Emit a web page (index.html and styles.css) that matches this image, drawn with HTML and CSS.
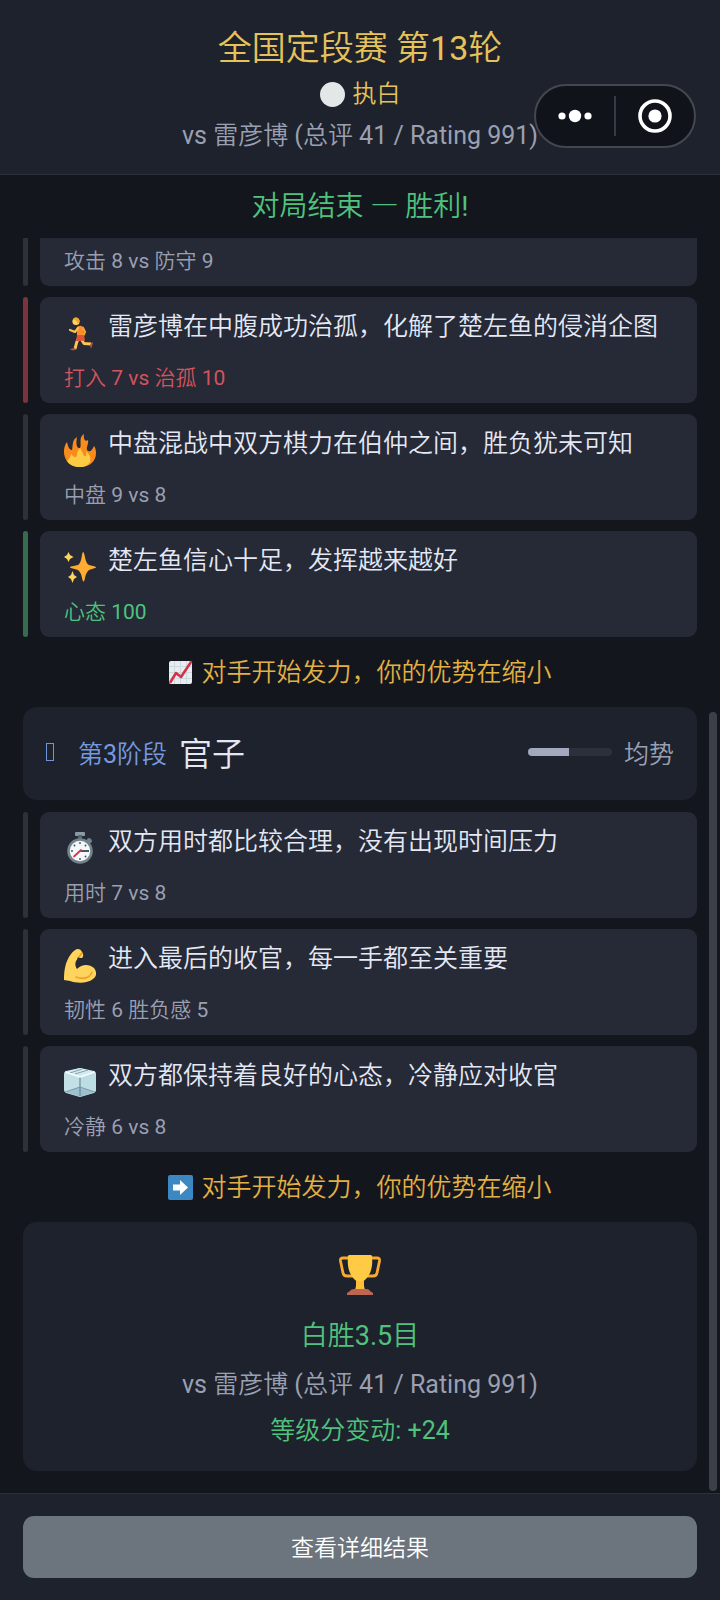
FILE: index.html
```html
<!DOCTYPE html>
<html lang="zh-CN">
<head>
<meta charset="utf-8">
<meta name="viewport" content="width=device-width, initial-scale=1">
<title>全国定段赛 第13轮</title>
<link rel="stylesheet" href="styles.css">
</head>
<body>
<header class="header">
  <h1 class="header-title">全国定段赛 第13轮</h1>
  <p class="side"><span class="stone"></span>执白</p>
  <p class="versus">vs 雷彦博 (总评 41 / Rating 991)</p>
  <div class="capsule">
    <button class="capsule-button" type="button" aria-label="更多">
      <svg width="36" height="36" viewBox="0 0 36 36" fill="#fff"><circle cx="5" cy="18" r="3.6"/><circle cx="18" cy="18" r="6.2"/><circle cx="31" cy="18" r="3.6"/></svg>
    </button>
    <span class="capsule-divider"></span>
    <button class="capsule-button" type="button" aria-label="关闭">
      <svg width="36" height="36" viewBox="0 0 36 36"><circle cx="18" cy="18" r="15" fill="none" stroke="#fff" stroke-width="3.6"/><circle cx="18" cy="18" r="6.6" fill="#fff"/></svg>
    </button>
  </div>
</header>

<main class="main">
  <p class="status">对局结束 <span class="dash">—</span> 胜利!</p>
  <div class="timeline">
    <article class="event event-cut">
      <div class="event-card"><p class="event-detail">攻击 8 vs 防守 9</p></div>
    </article>

    <article class="event event-loss">
      <div class="event-card">
        <div class="event-row">
          <svg class="event-icon" viewBox="0 0 32 34">
            <path d="M13 10 Q17 7 20 11 L19 21 13 21 Z" fill="#ff8b2c"/>
            <path d="M14 11 L11 15 6 13" fill="none" stroke="#fcc14f" stroke-width="2.2" stroke-linecap="round" stroke-linejoin="round"/>
            <path d="M19 11 L21 15 19 19" fill="none" stroke="#f6a72f" stroke-width="2.2" stroke-linecap="round" stroke-linejoin="round"/>
            <path d="M14 22 L12.500 26 11 32" fill="none" stroke="#fcc64f" stroke-width="3" stroke-linejoin="round"/>
            <path d="M17 22 L20 26.500 27 27" fill="none" stroke="#fcc64f" stroke-width="2.8" stroke-linejoin="round"/>
            <path d="M13 18 H20 L21 23.500 16 24 12 24 Z" fill="#dc5436"/>
            <path d="M28 25 L26 28 27 32 29 26 Z M11 31 L6 32 Q7 34 12 33 Z" fill="#bb5146"/>
            <circle cx="12" cy="4.500" r="3.600" fill="#ffd45c"/>
            <path d="M9 2 Q11 -1 14 1 Q17 4 14 7 L12.500 4 Z" fill="#f5a52d"/>
          </svg>
          <p class="event-text">雷彦博在中腹成功治孤，化解了楚左鱼的侵消企图</p>
        </div>
        <p class="event-detail">打入 7 vs 治孤 10</p>
      </div>
    </article>

    <article class="event">
      <div class="event-card">
        <div class="event-row">
          <svg class="event-icon" viewBox="0 0 32 34">
            <path d="M20 0 C14 4 18 10 16 14 C12 15 12 8 13 3 C8 6 9 11 8 16 C5 16 4 12 3 8 C0 12 0 16 0 19 C1 28 7 33 16 33 C26 33 32 27 32 19 C32 16 31 13 30 12 C28 16 27 18 24 17 C21 15 25 10 24 6 C22 8 19 6 20 0 Z" fill="#f98b1d"/>
            <path d="M16 14 C18 17 19 20 20 22 C22 23 23 21 22 17 C26 21 27 24 26 28 C24 31 21 33 16 33 C10 33 6 31 3 27 C5 26 7 22 7 19 C9 23 11 24 12 23 C14 20 12 18 16 14 Z" fill="#fecb45"/>
          </svg>
          <p class="event-text">中盘混战中双方棋力在伯仲之间，胜负犹未可知</p>
        </div>
        <p class="event-detail">中盘 9 vs 8</p>
      </div>
    </article>

    <article class="event event-win">
      <div class="event-card">
        <div class="event-row">
          <svg class="event-icon" viewBox="0 0 32 34">
            <path d="M19 1 Q20 1 20.500 4 Q22 13 25 14 L31 15.500 Q33 16.500 31 17 L25 19 Q22 21 20.500 29 Q19.500 32 18.500 29 Q17 21 14 19 L7 17 Q5 16 7 15.500 L14 14 Q17 12 18 4 Q18.500 1 19 1 Z" fill="#ffad32"/>
            <path d="M4.500 1 L6 4 9.500 6 6 8 4.500 11 3 8 0 6 3 4 Z M8.500 20 L10 24 13 26 10 28 8.500 32 7 28 4 26 7 24 Z" fill="#ffd45c"/>
          </svg>
          <p class="event-text">楚左鱼信心十足，发挥越来越好</p>
        </div>
        <p class="event-detail">心态 100</p>
      </div>
    </article>

    <p class="hint">
      <svg class="hint-icon" viewBox="0 0 25 25">
        <rect x="1" y="1" width="23" height="23" rx="2" fill="#e6ecef"/>
        <path d="M6.500 1 V24 M12.500 1 V24 M18.500 1 V24 M1 6.500 H24 M1 12.500 H24 M1 18.500 H24" stroke="#ccd9df" stroke-width="1"/>
        <path d="M2.500 22 L8 13 13 17 23 2" fill="none" stroke="#d33347" stroke-width="2.600" stroke-linejoin="round" stroke-linecap="round"/>
      </svg>
      对手开始发力，你的优势在缩小
    </p>

    <section class="phase">
      <span class="phase-mark"></span>
      <span class="phase-number">第3阶段</span>
      <h2 class="phase-name">官子</h2>
      <span class="meter"><span class="meter-fill" style="width: 49%"></span></span>
      <span class="phase-state">均势</span>
    </section>

    <article class="event">
      <div class="event-card">
        <div class="event-row">
          <svg class="event-icon" viewBox="0 0 32 34">
            <rect x="11" y="0" width="10" height="4" rx="1" fill="#8a9aa3"/>
            <rect x="14" y="3" width="4" height="4" fill="#56666f"/>
            <path d="M25 8 L26 9" stroke="#6f828c" stroke-width="4" stroke-linecap="round"/>
            <circle cx="16" cy="19" r="11.500" fill="#f4f8fa" stroke="#71848d" stroke-width="2.600"/>
            <g fill="#3c4a52"><circle cx="16" cy="11" r=".9"/><circle cx="16" cy="27" r=".9"/><circle cx="8" cy="19" r=".9"/><circle cx="10.500" cy="13.500" r=".9"/><circle cx="21.500" cy="13.500" r=".9"/><circle cx="21.500" cy="24.500" r=".9"/></g>
            <path d="M16 19 H25" stroke="#38444b" stroke-width="1.800"/>
            <path d="M17 18 L10 24.500" stroke="#db3446" stroke-width="1.800" stroke-linecap="round"/>
          </svg>
          <p class="event-text">双方用时都比较合理，没有出现时间压力</p>
        </div>
        <p class="event-detail">用时 7 vs 8</p>
      </div>
    </article>

    <article class="event">
      <div class="event-card">
        <div class="event-row">
          <svg class="event-icon" viewBox="0 0 32 34">
            <path d="M0 31 C0 22 1 13 7 5 C9 2 12 0 14 0 C17 0 18 3 19 5 C20 9 17 10 14 8 C13 9 14 10 12 12 C11 15 11 17 13 20 C18 15 25 15 30 19 C33 23 33 27 29 30 C23 35 12 34 6 32 Z" fill="#ffd45c"/>
            <path d="M12 28 C19 31 26 29 28 23" fill="none" stroke="#f0a12b" stroke-width="1.600" stroke-linecap="round"/>
            <path d="M15 8 L18 4" stroke="#ee9825" stroke-width="1.500" stroke-linecap="round"/>
          </svg>
          <p class="event-text">进入最后的收官，每一手都至关重要</p>
        </div>
        <p class="event-detail">韧性 6 胜负感 5</p>
      </div>
    </article>

    <article class="event">
      <div class="event-card">
        <div class="event-row">
          <svg class="event-icon" viewBox="0 0 32 34">
            <path d="M16 2 L30 5 Q32 6 32 8 V24 Q32 26 30 27 L16 31 2 27 Q0 26 0 24 V8 Q0 6 2 5 Z" fill="#c3e0e7"/>
            <path d="M16 2 L31 6 16 11 1 6 Z" fill="#d5eaf0"/>
            <path d="M17 12 L32 7 V25 L17 21 Z" fill="#bddde4"/>
            <path d="M16 21 L31 26 16 31 1 26 Z" fill="#9cc0ce"/>
            <path d="M16 11 V30" stroke="#66899a" stroke-width="1.200"/>
            <path d="M1 26 L16 21 31 26 M6 7 L18 3 M11 8 L24 4" fill="none" stroke="#6d909e" stroke-width=".8"/>
            <path d="M1 6 L16 11 31 6" fill="none" stroke="#f4fcff" stroke-width="1.400"/>
          </svg>
          <p class="event-text">双方都保持着良好的心态，冷静应对收官</p>
        </div>
        <p class="event-detail">冷静 6 vs 8</p>
      </div>
    </article>

    <p class="hint">
      <svg class="hint-icon" viewBox="0 0 25 25">
        <rect width="25" height="25" rx="2" fill="#3b88c3"/>
        <path d="M5 9.500 H12 V5 L20 12.500 12 20 V15.500 H5 Z" fill="#fff"/>
      </svg>
      对手开始发力，你的优势在缩小
    </p>

    <section class="result">
      <svg class="trophy" viewBox="0 0 42 42">
        <path d="M10 4 H4 Q1 4 1.500 7 L4 19 Q4.500 22 8 22 H14 M32 4 H38 Q41 4 40.500 7 L38 19 Q37.500 22 34 22 H28" fill="none" stroke="#f9a92e" stroke-width="2.800"/>
        <path d="M19 26 H23 L25 35 H17 Z" fill="#f9a92e"/>
        <path d="M9 2 Q9 1 11 1 H31 Q33 1 33 2 C34 13 32 20 26 26 Q24 28 21 28 Q18 28 16 26 C10 20 8 13 9 2 Z" fill="#ffcb45"/>
        <path d="M17 27 H25 V32 L26 36 H16 L17 32 Z" fill="#ffbd39"/>
        <path d="M8 41 V39 L11 37 Q12 35 15 35 H28 Q30 35 31 37 L34 39 V41 Z" fill="#bd6652"/>
      </svg>
      <h2 class="result-score">白胜3.5目</h2>
      <p class="result-versus">vs 雷彦博 (总评 41 / Rating 991)</p>
      <p class="result-rating">等级分变动: +24</p>
    </section>
    <span class="scroll-thumb"></span>
  </div>
</main>

<footer class="footer">
  <button class="details-button" type="button">查看详细结果</button>
</footer>
</body>
</html>
```
FILE: styles.css
```css
* {
  box-sizing: border-box;
}

body {
  margin: 0;
  min-height: 100vh;
  display: flex;
  flex-direction: column;
  background: #13171d;
  color: #e4e8f5;
  font-family: Roboto, "Noto Sans CJK SC DemiLight", "Noto Sans CJK SC", sans-serif;
  font-size: 25px;
  font-weight: 400;
}

h1, h2, p {
  margin: 0;
  font-weight: inherit;
}

button {
  border: 0;
  padding: 0;
  font: inherit;
  color: inherit;
  background: none;
}

svg {
  display: block;
  flex: none;
}

.header {
  position: relative;
  padding: 24px 24px 22px;
  border-bottom: 1px solid #2d313b;
  background: #1e222c;
  text-align: center;
}

.header-title {
  color: #e6c35a;
  font-size: 34px;
  line-height: 48px;
}

.side {
  display: flex;
  align-items: center;
  justify-content: center;
  gap: 8px;
  margin-top: 6px;
  color: #e6c35a;
  font-size: 24px;
  line-height: 32px;
}

.stone {
  width: 25px;
  height: 25px;
  border-radius: 50%;
  background: #e4e7e8;
}

.versus {
  margin-top: 10px;
  color: #9aa0b2;
  line-height: 32px;
}

.capsule {
  position: absolute;
  top: 84px;
  right: 24px;
  width: 162px;
  height: 64px;
  display: flex;
  align-items: center;
  border: 2px solid #44474f;
  border-radius: 32px;
  background: #10131a;
}

.capsule-button {
  flex: 1;
  display: flex;
  justify-content: center;
}

.capsule-divider {
  width: 2px;
  height: 40px;
  background: #373a42;
}

.main {
  flex: 1;
}

.status {
  padding: 12px 24px 11px;
  color: #4fc37d;
  font-size: 28px;
  line-height: 40px;
  text-align: center;
}

.dash {
  font-family: "Noto Sans CJK SC", sans-serif;
  line-height: 1;
}

.timeline {
  position: relative;
  padding: 0 23px 22px;
}

.event {
  display: flex;
  gap: 12px;
  margin-bottom: 11px;
}

.event::before {
  content: "";
  width: 5px;
  border-radius: 3px;
  background: #2d3138;
}

.event-loss::before {
  background: #7c343c;
}

.event-win::before {
  background: #366c4e;
}

.event-card {
  flex: 1;
  padding: 12px 24px 10px;
  border-radius: 9px;
  background: #262936;
}

.event-cut::before {
  border-radius: 0 0 3px 3px;
}

.event-cut .event-card {
  padding-top: 8px;
  border-radius: 0 0 9px 9px;
}

.event-row {
  display: flex;
  gap: 12px;
  margin-bottom: 12px;
}

.event-icon {
  width: 32px;
  height: 34px;
  margin-top: 8px;
}

.event-text {
  line-height: 36px;
}

.event-detail {
  color: #9aa0b2;
  font-size: 21px;
  line-height: 30px;
}

.event-loss .event-detail {
  color: #d2545c;
}

.event-win .event-detail {
  color: #4fc37d;
}

.hint {
  display: flex;
  align-items: center;
  justify-content: center;
  gap: 8px;
  margin-top: -11px;
  padding-top: 1px;
  color: #e2b043;
  line-height: 69px;
}

.hint-icon {
  width: 25px;
  height: 25px;
}

.phase {
  display: flex;
  align-items: center;
  min-height: 93px;
  margin-bottom: 12px;
  padding: 14px 23px 18px;
  border-radius: 14px;
  background: #1e222c;
}

.phase-mark {
  width: 8px;
  height: 18px;
  margin-right: 24px;
  border: 1px solid #6f94da;
}

.phase-number {
  color: #759ae2;
}

.phase-name {
  margin-left: 12px;
  font-size: 33px;
}

.meter {
  width: 84px;
  height: 8px;
  margin-left: auto;
  margin-right: 12px;
  overflow: hidden;
  border-radius: 4px;
  background: #2c303c;
}

.meter-fill {
  display: block;
  height: 100%;
  background: #a2a9bf;
}

.phase-state {
  color: #9aa0b2;
}

.result {
  display: flex;
  flex-direction: column;
  align-items: center;
  padding: 32px 24px 17px;
  border-radius: 14px;
  background: #1e222c;
  line-height: 46px;
}

.trophy {
  width: 42px;
  height: 42px;
  margin-bottom: 17px;
}

.result-score {
  margin-bottom: 3px;
  color: #4fc37d;
  font-size: 27px;
}

.result-versus {
  color: #9aa0b2;
}

.result-rating {
  color: #4fc37d;
}

.scroll-thumb {
  position: absolute;
  top: 474px;
  right: 3px;
  bottom: 2px;
  width: 8px;
  border-radius: 4px;
  background: #3b3f47;
}

.footer {
  padding: 22px 23px;
  border-top: 1px solid #2d313b;
  background: #1e222c;
}

.details-button {
  width: 100%;
  height: 62px;
  padding-bottom: 2px;
  border-radius: 11px;
  background: #6c747d;
  color: #fff;
  font-size: 23px;
}
```
